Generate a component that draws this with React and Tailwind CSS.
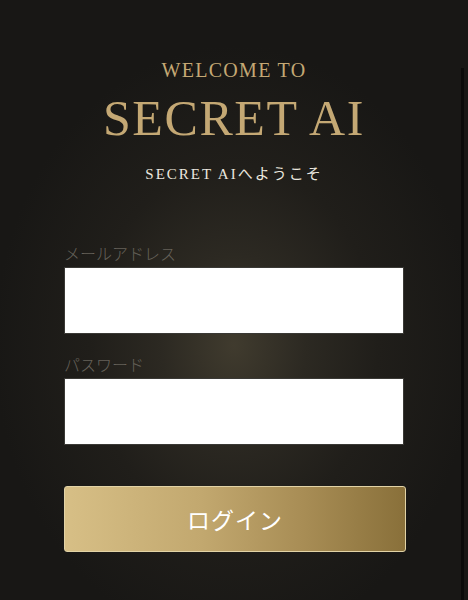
import { useState } from 'react';

const serif = { fontFamily: '"Liberation Serif", "Noto Sans CJK JP", serif' };
const jp = { fontFamily: '"Noto Sans CJK JP", "Noto Sans", sans-serif' };

const Field = ({ label, type, value, onChange, className }) => (
  <div className={className}>
    <label className="block text-[16px] leading-none font-light text-[#66625a]" style={jp}>
      {label}
    </label>
    <input
      type={type}
      value={value}
      onChange={(e) => onChange(e.target.value)}
      className="mt-[6px] block h-[67px] w-[340px] border border-[#3a3935] bg-white px-3 text-[16px] text-black focus:outline-none"
    />
  </div>
);

const App = () => {
  const [email, setEmail] = useState('');
  const [password, setPassword] = useState('');

  return (
    <div className="flex h-[600px] w-full overflow-hidden bg-[#171614] bg-[radial-gradient(ellipse_240px_300px_at_234px_345px,#403b2e_0%,#2c2922_30%,#201e1a_60%,#181715_100%)]">
      <main className="flex-1 pl-16 pt-[60px]">
        <div className="flex w-[340px] flex-col items-center">
          <p className="text-[20px] leading-none tracking-[1.3px] text-[#c4a874]" style={serif}>
            WELCOME TO
          </p>
          <h1 className="mt-[13px] text-[50px] leading-none tracking-[1.6px] text-[#c4a874]" style={serif}>
            SECRET AI
          </h1>
          <p className="mt-[24px] text-[15px] leading-none tracking-[2px] text-[#ebe7df]" style={serif}>
            SECRET AIへようこそ
          </p>
        </div>

        <form onSubmit={(e) => e.preventDefault()}>
          <Field className="mt-[63px]" label="メールアドレス" type="email" value={email} onChange={setEmail} />
          <Field className="mt-[22px]" label="パスワード" type="password" value={password} onChange={setPassword} />
          <button
            type="submit"
            className="mt-[41px] flex h-[66px] w-[342px] items-center justify-center rounded-[3px] border border-[#e2d3a6] bg-[linear-gradient(90deg,#d7bf86_0%,#c2a86f_40%,#a88d55_70%,#89703a_100%)] text-[23px] font-normal tracking-[1px] text-white"
            style={jp}
          >
            ログイン
          </button>
        </form>
      </main>
      <div className="mt-[68px] mr-[4px] w-[3px] bg-[#0b0b0a]" />
    </div>
  );
};

export default App;
